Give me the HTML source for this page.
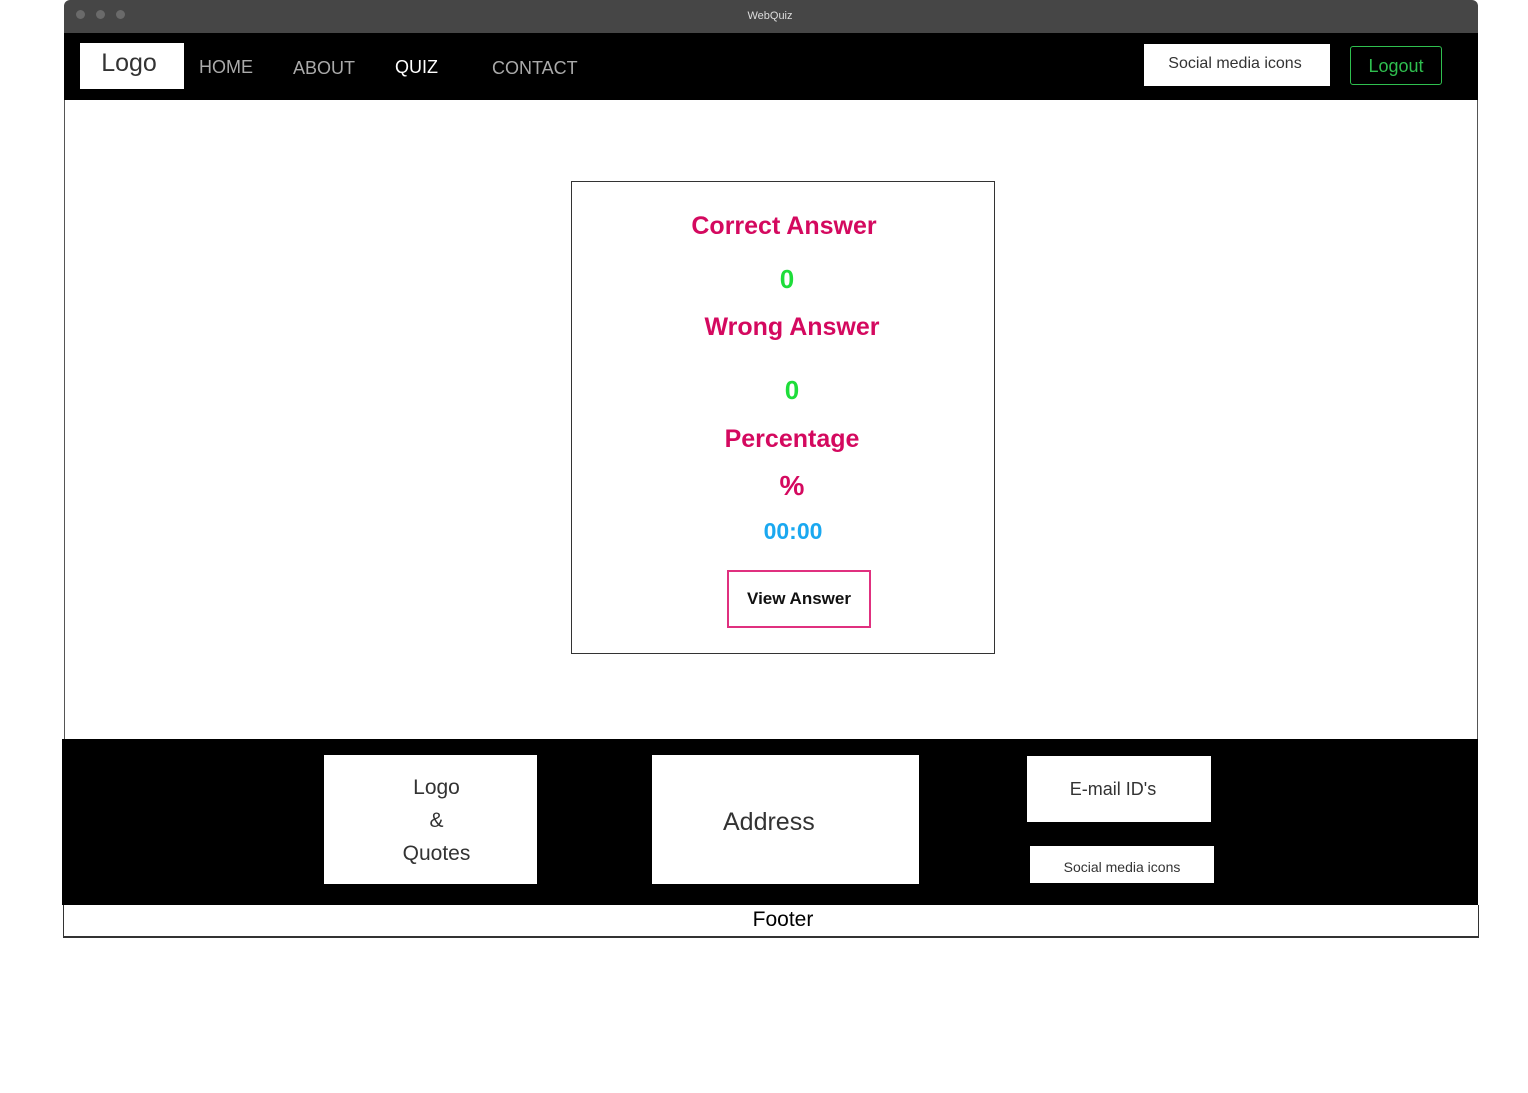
<!DOCTYPE html>
<html><head><meta charset="utf-8"><style>
*{margin:0;padding:0;box-sizing:border-box}
body{width:1528px;height:1093px;background:#fff;position:relative;font-family:"Liberation Sans",sans-serif;overflow:hidden}
.a{position:absolute}
.c{position:absolute;transform:translateX(-50%);white-space:nowrap;font-weight:bold;line-height:1}
.box{position:absolute;background:#fff;color:#333;display:flex;align-items:center;justify-content:center;text-align:center}
</style></head><body>
<div class="a" style="left:64px;top:0;width:1414px;height:34px;background:#464646;border-radius:6px 6px 0 0"></div>
<div class="a" style="left:76px;top:10px;width:9px;height:9px;border-radius:50%;background:#6a6a6a"></div>
<div class="a" style="left:96px;top:10px;width:9px;height:9px;border-radius:50%;background:#6a6a6a"></div>
<div class="a" style="left:116px;top:10px;width:9px;height:9px;border-radius:50%;background:#6a6a6a"></div>
<div class="a" style="left:0;width:1540px;top:10px;text-align:center;color:#ddd;font-size:11px">WebQuiz</div>
<div class="a" style="left:64px;top:33px;width:1414px;height:67px;background:#000"></div>
<div class="box" style="left:80px;top:43px;width:104px;height:46px;font-size:25px;padding-bottom:6px;padding-right:6px">Logo</div>
<div class="a" style="left:199px;top:57px;color:#aaa;font-size:18px">HOME</div>
<div class="a" style="left:293px;top:58px;color:#aaa;font-size:18px">ABOUT</div>
<div class="a" style="left:395px;top:57px;color:#fff;font-size:18px">QUIZ</div>
<div class="a" style="left:492px;top:58px;color:#aaa;font-size:18px">CONTACT</div>
<div class="box" style="left:1144px;top:44px;width:186px;height:42px;font-size:16px;padding-bottom:2px;padding-right:4px">Social media icons</div>
<div class="a" style="left:1350px;top:46px;width:92px;height:39px;border:1px solid #2fbf4f;border-radius:3px;color:#2fbf4f;font-size:18px;text-align:center;line-height:38px">Logout</div>
<div class="a" style="left:64px;top:100px;width:1414px;height:640px;border-left:1px solid #555;border-right:1px solid #555"></div>
<div class="a" style="left:571px;top:181px;width:424px;height:473px;border:1.5px solid #333"></div>
<div class="c" style="left:784px;top:214px;font-size:25px;color:#d4095f">Correct Answer</div>
<div class="c" style="left:787px;top:266px;font-size:26px;color:#1edd3a">0</div>
<div class="c" style="left:792px;top:315px;font-size:25px;color:#d4095f">Wrong Answer</div>
<div class="c" style="left:792px;top:377px;font-size:26px;color:#1edd3a">0</div>
<div class="c" style="left:792px;top:427px;font-size:25px;color:#d4095f">Percentage</div>
<div class="c" style="left:792px;top:472px;font-size:28px;color:#d4095f">%</div>
<div class="c" style="left:793px;top:520px;font-size:23px;color:#1aa8f0">00:00</div>
<div class="a" style="left:727px;top:570px;width:144px;height:58px;border:2px solid #e0307f"></div>
<div class="c" style="left:799px;top:590px;font-size:17px;color:#111">View Answer</div>
<div class="a" style="left:62px;top:739px;width:1416px;height:166px;background:#000"></div>
<div class="box" style="left:324px;top:755px;width:213px;height:129px;font-size:21px;line-height:33px;padding-left:12px;padding-top:2px">Logo<br>&amp;<br>Quotes</div>
<div class="box" style="left:652px;top:755px;width:267px;height:129px;font-size:25px;justify-content:flex-start;padding-left:71px;padding-top:6px">Address</div>
<div class="box" style="left:1027px;top:756px;width:184px;height:66px;font-size:18px;padding-bottom:0;padding-right:12px">E-mail ID's</div>
<div class="box" style="left:1030px;top:846px;width:184px;height:37px;font-size:14px;padding-top:4px">Social media icons</div>
<div class="a" style="left:63px;top:905px;width:1416px;height:33px;border:1px solid #333;border-top:none;border-bottom:2px solid #333"></div>
<div class="a" style="left:0;width:1566px;top:908px;text-align:center;font-size:21px;color:#000">Footer</div>
</body></html>
